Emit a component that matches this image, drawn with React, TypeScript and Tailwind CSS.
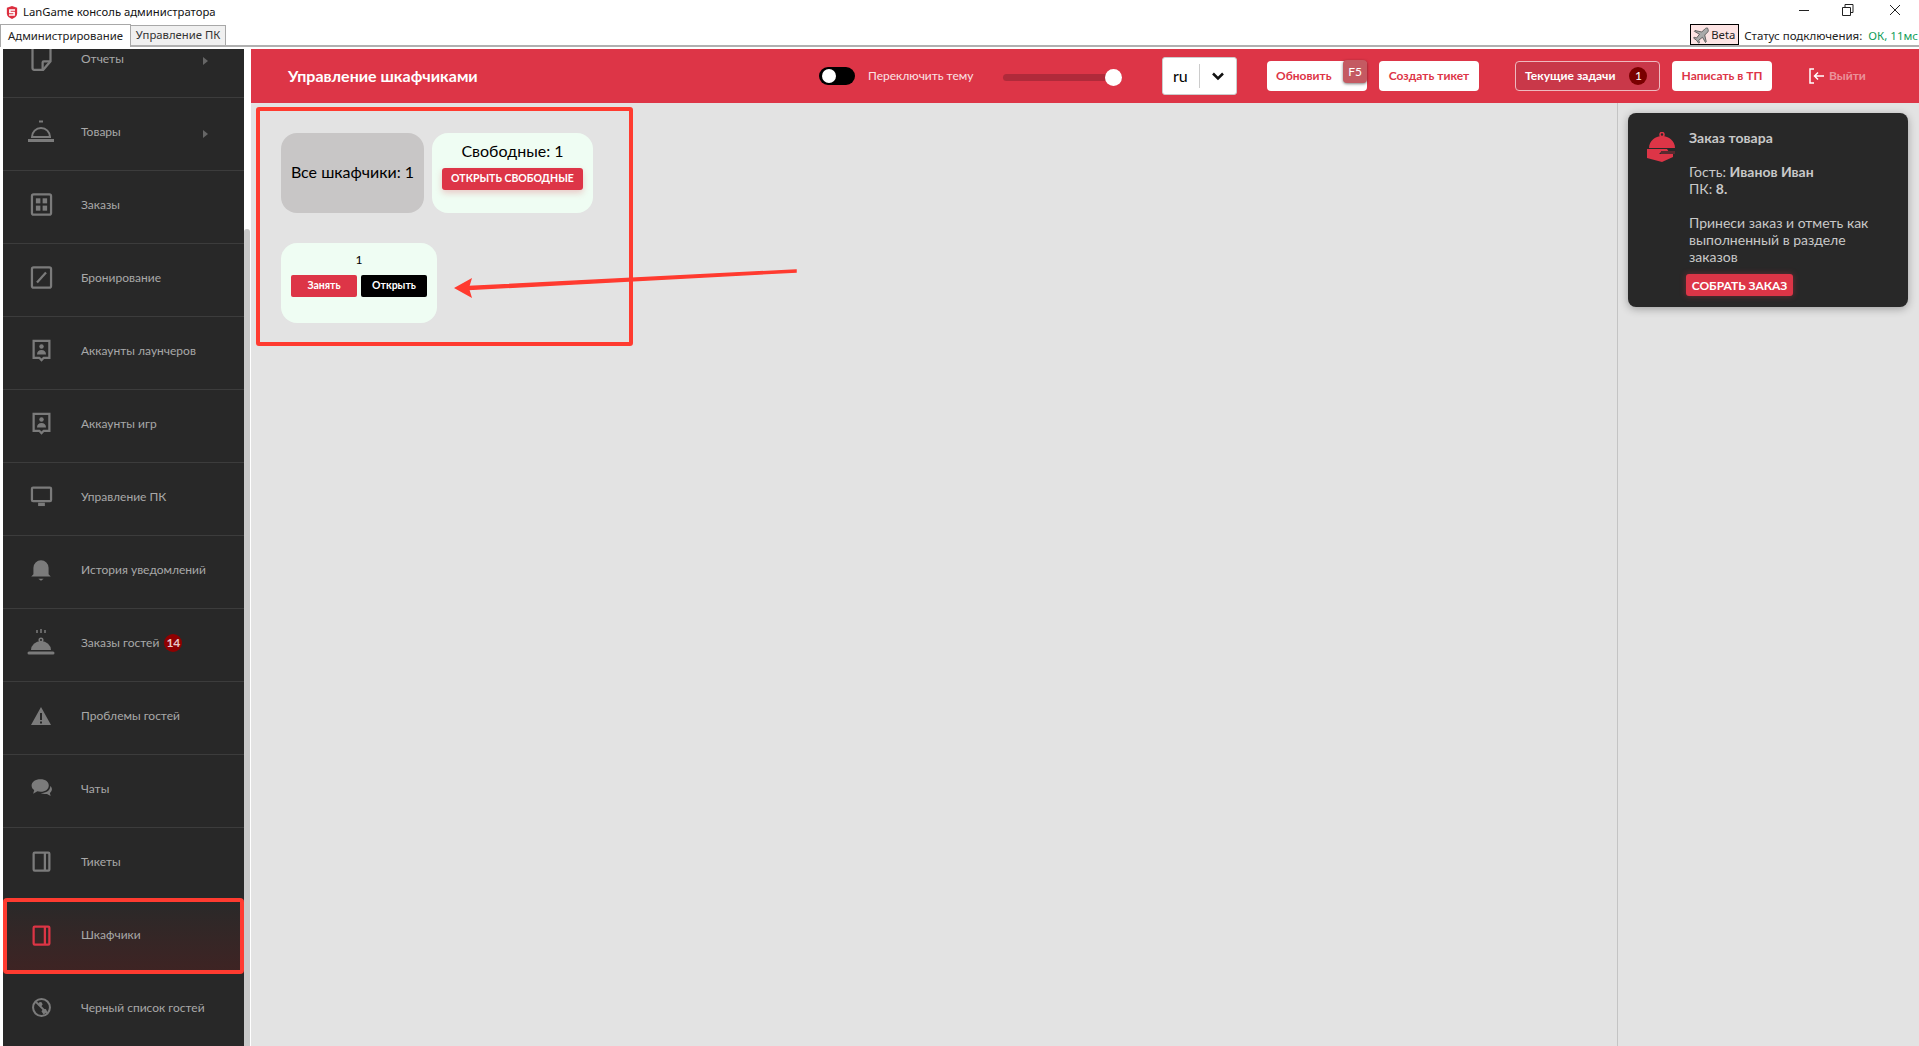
import type { ReactNode } from 'react'

const icon = 'w-[27px] h-[27px] fill-none stroke-current'

const icons: Record<string, ReactNode> = {
  report: (
    <svg viewBox="0 0 24 24" className={icon} strokeWidth="2">
      <path d="M4 2.500h16v12L13.500 22H5.500A1.500 1.500 0 0 1 4 20.500z" />
      <path d="M13 21.500V15.500a1 1 0 0 1 1-1h6" />
    </svg>
  ),
  bell: (
    <svg viewBox="0 0 30 30" className="h-[30px] w-[30px] fill-none stroke-current" strokeWidth="2">
      <path d="M13 4.500h4" />
      <path d="M6 20a9 9 0 0 1 18 0z" />
      <path d="M2 23.500h26" strokeWidth="3" />
    </svg>
  ),
  grid: (
    <svg viewBox="0 0 24 24" className={icon} strokeWidth="2">
      <rect x="3.500" y="3" width="17" height="18" rx="1.500" />
      <rect x="7" y="6.500" width="4" height="4.500" className="fill-current stroke-none" />
      <rect x="13" y="6.500" width="4" height="4.500" className="fill-current stroke-none" />
      <rect x="7" y="13" width="4" height="4.500" className="fill-current stroke-none" />
      <rect x="13" y="13" width="4" height="4.500" className="fill-current stroke-none" />
    </svg>
  ),
  slash: (
    <svg viewBox="0 0 24 24" className={icon} strokeWidth="2">
      <rect x="3.500" y="3" width="17" height="18" rx="1.500" />
      <path d="M8 16.500 16 7.500" />
    </svg>
  ),
  account: (
    <svg viewBox="0 0 24 24" className={icon} strokeWidth="2">
      <path d="M5 3.500h14v15h-5l-2 2-2-2H5z" />
      <circle cx="12" cy="8.500" r="2" className="fill-current stroke-none" />
      <path d="M8 15.500c0-2.500 1.500-4 4-4s4 1.500 4 4z" className="fill-current stroke-none" />
    </svg>
  ),
  monitor: (
    <svg viewBox="0 0 24 24" className={icon} strokeWidth="2">
      <rect x="3.500" y="4" width="17" height="12" rx="1" />
      <path d="M9 19h6" strokeWidth="3" />
    </svg>
  ),
  notify: (
    <svg viewBox="0 0 24 24" className="h-[26px] w-[26px] fill-current">
      <path d="M5 16V10a7 7 0 0 1 14 0v6l2 2H3z" />
      <path d="M9.500 20h5L12 22z" />
    </svg>
  ),
  order: (
    <svg viewBox="0 0 30 30" className="h-[30px] w-[30px] fill-current stroke-current" strokeWidth="1.500">
      <path d="M11 2v3M15 1v4M19 2v3" fill="none" />
      <path d="M5 22a10 9 0 0 1 20 0z" stroke="none" />
      <circle cx="15" cy="12" r="1.800" fill="none" />
      <path d="M3 25h24" strokeWidth="3" strokeLinecap="round" />
    </svg>
  ),
  warn: (
    <svg viewBox="0 0 24 24" className="h-[24px] w-[24px] fill-current">
      <path fillRule="evenodd" d="M12 3 22 21H2zM11 9v7h2V9zm0 8.500v2h2v-2z" />
    </svg>
  ),
  chat: (
    <svg viewBox="0 0 24 24" className="h-[25px] w-[25px] fill-current">
      <path d="M11 3c5 0 8 2.500 8 6s-3 6-8 6c-1 0-2 0-3-.3L4 17l1-3.500C3.500 12.500 2.500 11 2.500 9c0-3.500 3.500-6 8.500-6z" />
      <path d="M20.500 9.500c1 1 1.500 2 1.500 3.300 0 1.500-.8 2.700-2 3.500l.8 3-3.500-2c-2.300.2-4.500-.2-5.800-1 5 0 9-2.500 9-6.800z" />
    </svg>
  ),
  locker: (
    <svg viewBox="0 0 24 24" className={icon} strokeWidth="2">
      <rect x="5" y="4" width="14" height="16" rx="1" />
      <path d="M15 4v16" />
    </svg>
  ),
  ban: (
    <svg viewBox="0 0 24 24" className={icon} strokeWidth="1.800">
      <circle cx="12" cy="12" r="7.500" />
      <path d="m7 7 10 10" />
      <circle cx="11" cy="9" r="1.800" className="fill-current stroke-none" />
      <path d="M12 15.500c1-2 2.500-2.500 4-2l1 2-3 3z" className="fill-current stroke-none" />
    </svg>
  ),
}

const items = [
  { label: 'Отчеты', icon: 'report', arrow: true },
  { label: 'Товары', icon: 'bell', arrow: true },
  { label: 'Заказы', icon: 'grid' },
  { label: 'Бронирование', icon: 'slash' },
  { label: 'Аккаунты лаунчеров', icon: 'account' },
  { label: 'Аккаунты игр', icon: 'account' },
  { label: 'Управление ПК', icon: 'monitor' },
  { label: 'История уведомлений', icon: 'notify' },
  { label: 'Заказы гостей', icon: 'order', badge: '14' },
  { label: 'Проблемы гостей', icon: 'warn' },
  { label: 'Чаты', icon: 'chat' },
  { label: 'Тикеты', icon: 'locker' },
  { label: 'Шкафчики', icon: 'locker', active: true },
  { label: 'Черный список гостей', icon: 'ban' },
]

function SideItem({ item }: { item: (typeof items)[number] }) {
  return (
    <div
      className={
        item.active
          ? 'relative flex h-[73px] items-center bg-gradient-to-b from-[#292929] to-[#3f2323] pb-[5px]'
          : 'relative flex h-[73px] items-center border-b border-[#3c3c3c] pb-[5px]'
      }
    >
      <div className={item.active ? 'flex w-[76px] justify-center text-[#dc3545]' : 'flex w-[76px] justify-center text-[#7b7b7b]'}>
        {icons[item.icon]}
      </div>
      <span className="ml-[2px] text-[12px] text-[#a8a8a8]">{item.label}</span>
      {item.badge && (
        <span className="ml-[5px] flex h-[18px] w-[18px] items-center justify-center rounded-full bg-[#8f0000] text-[12px] font-bold text-[#e6c8c8]">
          {item.badge}
        </span>
      )}
      {item.arrow && <span className="absolute left-[200px] top-[32px] h-0 w-0 border-y-[4px] border-l-[5px] border-y-transparent border-l-[#666666]" />}
      {item.active && <div className="absolute bottom-0 left-0 -top-[3px] w-[241px] rounded-sm border-[4px] border-[#ff3b30]" />}
    </div>
  )
}

function TitleBar() {
  return (
    <div className="relative h-[47px] border-b-2 border-[#b0b0b0] bg-white" style={{ fontFamily: '"Noto Sans", sans-serif' }}>
      <div className="flex h-[24px] items-center pl-[6px]">
        <svg viewBox="0 0 14 16" className="h-[15px] w-[12px]">
          <path d="M7 .500 13 2.500v7c0 3-3 5-6 6-3-1-6-3-6-6v-7z" fill="#dc2f3f" />
          <path d="M10.500 5H4.500v3h5v3h-6" fill="none" stroke="#ffffff" strokeWidth="1.800" />
        </svg>
        <span className="ml-[5px] text-[11.300px] text-[#111111]">LanGame консоль администратора</span>
      </div>
      <div className="flex h-[21px] items-end">
        <div className="z-10 -mb-[2px] flex h-[23px] w-[131px] items-center justify-center border border-b-0 border-[#a8a8a8] bg-white text-[11.300px] text-[#222222]">
          Администрирование
        </div>
        <div className="flex h-[20px] w-[95px] items-center justify-center border border-b-0 border-l-0 border-[#a8a8a8] bg-[#f0f0f0] text-[11.300px] text-[#333333]">
          Управление ПК
        </div>
        <div className="ml-auto flex h-[21px] items-center">
          <div className="flex h-[21px] w-[49px] items-center border border-black bg-[#fde4e4] text-[11.300px] text-[#222222]">
            <svg viewBox="0 0 24 24" className="ml-[1px] h-[18px] w-[18px] fill-[#aaaaaa] stroke-[#444444]" strokeWidth="1">
              <path d="M21 3c-1-1-3 0-4 1l-4 4-9-2-1 1 7 4-4 5-3-1-1 1 4 3 3 4 1-1-1-3 5-4 4 7 1-1-2-9 4-4c1-1 1-3 0-4z" />
            </svg>
            <span className="ml-[1px] pt-[2px]">Beta</span>
          </div>
          <span className="ml-[5px] pt-[3px] text-[11.500px] text-[#222222]">Статус подключения:</span>
          <span className="ml-[6px] mr-[1px] pt-[3px] text-[11.500px] text-[#0f9d58]">ОК, 11мс</span>
        </div>
      </div>
      {/* window buttons */}
      <div className="absolute right-[7px] top-0 flex h-[20px] items-center text-[#222222]">
        <svg viewBox="0 0 134 20" className="h-[20px] w-[134px] fill-none stroke-current">
          <path d="M21 10.500h10" />
          <path d="M64.500 7.500h8v8h-8zM67 7V4.500h8v8h-2.500" />
          <path d="M112 5l10 10M122 5l-10 10" />
        </svg>
      </div>
    </div>
  )
}

function Header() {
  return (
    <div className="flex h-[54px] shrink-0 items-center bg-[#dd3547] text-white">
      <span className="ml-[37px] w-[531px] pb-[1px] text-[16px] font-bold">Управление шкафчиками</span>
      <div className="flex h-[18px] w-[36px] items-center rounded-full bg-black pl-[3px]">
        <span className="h-[14px] w-[14px] rounded-full bg-white" />
      </div>
      <span className="ml-[13px] w-[105px] whitespace-nowrap text-[12px] text-[#fbe3e5]">Переключить тему</span>
      <div className="relative ml-[30px] mt-[2px] h-[7px] w-[119px] rounded-full bg-[#b02a3a]">
        <span className="absolute -top-[5px] right-0 h-[17px] w-[17px] rounded-full bg-white" />
      </div>
      <div className="ml-[40px] flex h-[38px] w-[75px] items-center rounded-[3px] border border-[#cccccc] bg-white text-black">
        <span className="ml-[10px] w-[26px] text-[16px]">ru</span>
        <span className="h-[24px] w-px bg-[#cccccc]" />
        <svg viewBox="0 0 16 16" className="ml-[10px] h-[16px] w-[16px] fill-none stroke-[#111111]" strokeWidth="2.500">
          <path d="m3 5.500 5 5 5-5" />
        </svg>
      </div>
      <div className="relative ml-[30px] flex h-[30px] w-[100px] items-center rounded-[4px] bg-white pl-[9px] text-[12px] font-bold text-[#dd3547]">
        Обновить
        <span className="absolute -top-[1px] right-0 flex h-[23px] w-[24px] items-center justify-center rounded-[4px] bg-[#c45a62] text-[12px] font-normal text-white shadow-[0_1px_3px_rgba(0,0,0,0.5)]">
          F5
        </span>
      </div>
      <div className="ml-[12px] flex h-[30px] w-[100px] items-center justify-center rounded-[4px] bg-white text-[12px] font-bold text-[#dd3547]">
        Создать тикет
      </div>
      <div className="ml-[36px] flex h-[30px] w-[145px] items-center rounded-[4px] border border-[#eeb9bf] bg-[#c93849] pl-[9px] text-[12px] font-bold">
        Текущие задачи
        <span className="ml-[14px] flex h-[18px] w-[18px] items-center justify-center rounded-full bg-[#7a0000] font-normal">1</span>
      </div>
      <div className="ml-[12px] flex h-[30px] w-[100px] items-center justify-center rounded-[4px] bg-white text-[12px] font-bold text-[#dd3547]">
        Написать в ТП
      </div>
      <svg viewBox="0 0 18 18" className="ml-[36px] h-[18px] w-[18px] fill-none stroke-white" strokeWidth="1.500">
        <path d="M6 2H2v14h4" />
        <path d="M16 9H7m3-3.500L6.500 9l3.500 3.500" />
      </svg>
      <span className="ml-[3px] text-[12px] font-bold text-[#eb929b]">Выйти</span>
    </div>
  )
}

function LockerArea() {
  return (
    <div className="relative ml-[5px] mt-[4px] h-[239px] w-[377px] rounded-[3px] border-[4px] border-[#ff3b30] pl-[21px] pt-[22px]">
      <div className="flex gap-[8px]">
        <div className="flex h-[80px] w-[143px] items-center justify-center rounded-[16px] bg-[#c8c6c6] pb-[2px] text-[16px] text-black">
          Все шкафчики: 1
        </div>
        <div className="flex h-[80px] w-[161px] flex-col items-center rounded-[16px] bg-[#effdf3] pt-[8px]">
          <span className="text-[16px] leading-[20px] text-black">Свободные: 1</span>
          <button className="mt-[7px] h-[22px] w-[141px] rounded-[3px] bg-[#dd3547] text-[10.500px] font-bold text-white shadow-[0_3px_6px_rgba(221,53,71,0.25)]">
            ОТКРЫТЬ СВОБОДНЫЕ
          </button>
        </div>
      </div>
      <div className="mt-[30px] flex h-[80px] w-[156px] flex-col items-center rounded-[16px] bg-[#effdf3] pt-[9px]">
        <span className="text-[12px] leading-[16px] text-black">1</span>
        <div className="mt-[7px] flex gap-[4px]">
          <button className="h-[22px] w-[66px] rounded-[2px] bg-[#dd3547] text-[10.500px] font-bold text-white">Занять</button>
          <button className="h-[22px] w-[66px] rounded-[2px] bg-black text-[10.500px] font-bold text-white">Открыть</button>
        </div>
      </div>
    </div>
  )
}

function OrderCard() {
  return (
    <div className="ml-[10px] mt-[10px] flex h-[194px] w-[280px] rounded-[8px] bg-[#282828] pl-[19px] pt-[16px] text-[14px] leading-[17px] text-[#c8c8c8] shadow-[0_2px_8px_rgba(0,0,0,0.3)]">
      <svg viewBox="0 0 30 30" className="mt-[3px] h-[30px] w-[30px] shrink-0 fill-[#dd3547]">
        <circle cx="15" cy="2.500" r="2" fill="none" stroke="#dd3547" strokeWidth="1.500" />
        <path d="M2 16C2 9 8 4 15 4s13 5 13 12z" />
        <path d="M0 17h20l2 3h-8l-2 2h14v3l-11 5-15-4z" />
        <path d="M14 19h14v3H14z" fill="#5a2a30" />
      </svg>
      <div className="ml-[12px] flex flex-col">
        <span className="font-bold text-[#c8c8c8]">Заказ товара</span>
        <span className="mt-[17px]">
          Гость: <b>Иванов Иван</b>
        </span>
        <span>
          ПК: <b>8.</b>
        </span>
        <span className="mt-[17px] w-[190px]">Принеси заказ и отметь как выполненный в разделе заказов</span>
        <button className="-ml-[3px] mt-[9px] h-[22px] w-[107px] rounded-[3px] bg-[#dd3547] text-[12px] font-bold text-white shadow-[0_0_6px_rgba(221,53,71,0.4)]">
          СОБРАТЬ ЗАКАЗ
        </button>
      </div>
    </div>
  )
}

export default function App() {
  return (
    <div className="flex h-screen flex-col overflow-hidden bg-white">
      <TitleBar />
      <div className="mt-[2px] flex min-h-0 flex-1 pl-[3px]" style={{ fontFamily: 'Lato, sans-serif' }}>
        <div className="w-[241px] shrink-0 overflow-hidden bg-[#282828]">
          <div className="-mt-[24px]">
            {items.map((item) => (
              <SideItem key={item.label} item={item} />
            ))}
          </div>
        </div>
        <div className="flex w-[7px] shrink-0 flex-col">
          <div className="h-[180px] w-[6px] bg-white" />
          <div className="w-[6px] flex-1 rounded-t-[3px] bg-[#c8c8c8]" />
        </div>
        <div className="relative flex min-w-0 flex-1 flex-col">
          <Header />
          <div className="flex min-h-0 flex-1 bg-[#e3e3e3]">
            <div className="flex-1">
              <LockerArea />
            </div>
            <div className="w-[302px] shrink-0 border-l border-[#c4c4c4]">
              <OrderCard />
            </div>
          </div>
          {/* annotation arrow */}
          <svg viewBox="0 0 360 40" className="absolute left-[200px] top-[209px] h-[40px] w-[360px]">
            <path d="M345 12 18 28.500v3L345 14z" fill="#ff3b30" stroke="#ff3b30" strokeWidth="1.500" />
            <path d="M3 30 21 20l-3 10 3 10z" fill="#ff3b30" />
          </svg>
        </div>
      </div>
    </div>
  )
}
